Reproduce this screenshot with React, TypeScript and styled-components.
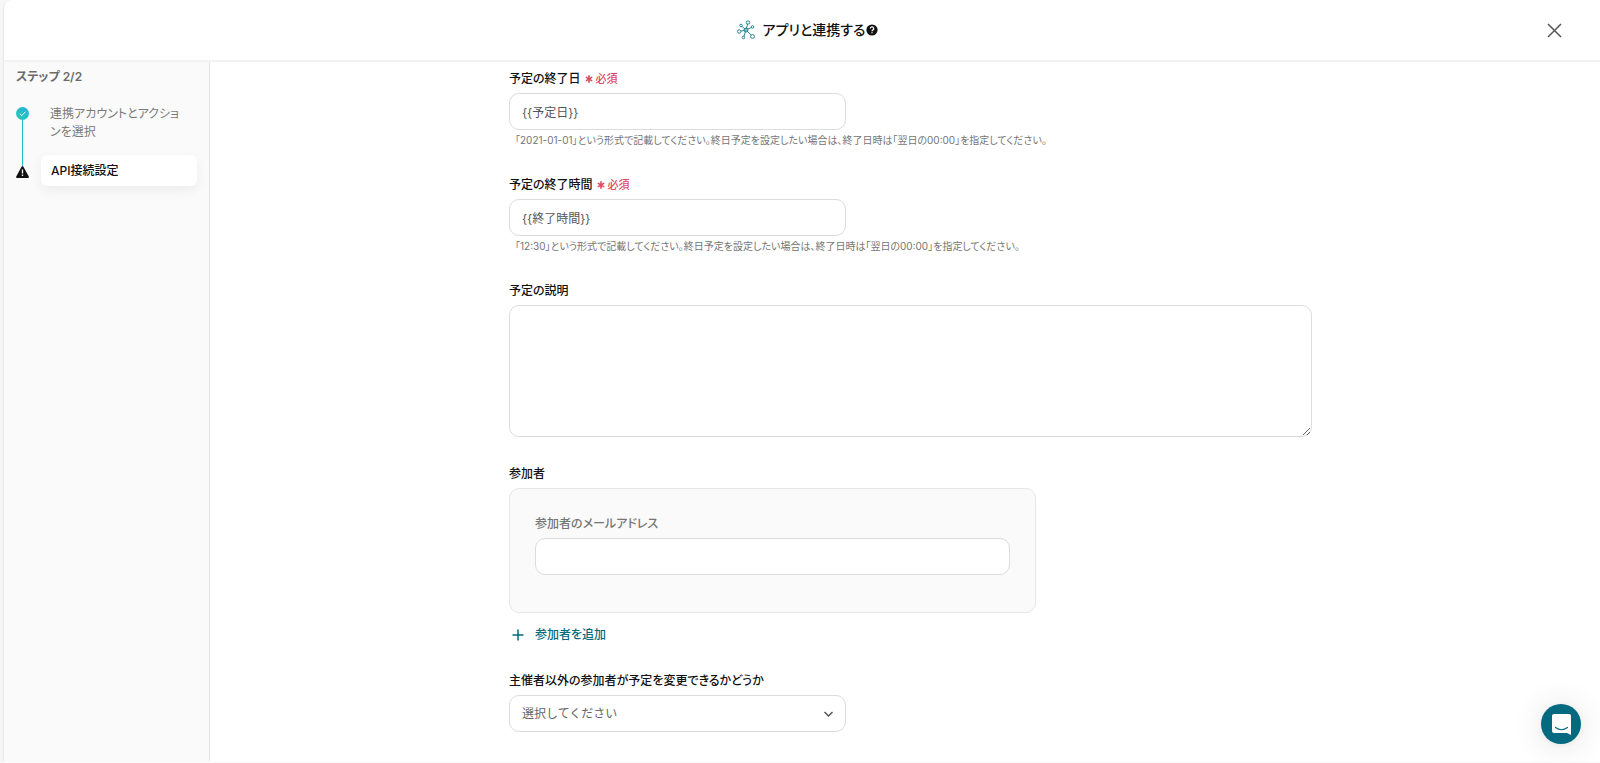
import React from 'react';
import styled, { createGlobalStyle } from 'styled-components';

const GlobalStyle = createGlobalStyle`
  * { box-sizing: border-box; }
  body {
    margin: 0;
    background: #f6f6f6;
    color: #111;
    font-family: Inter, "Noto Sans CJK JP", sans-serif;
    font-feature-settings: "palt";
    font-size: 12px;
    line-height: 18px;
  }
  button, input, select, textarea {
    font: inherit;
    font-feature-settings: inherit;
    color: inherit;
  }
`;

const Panel = styled.div`
  display: flex;
  flex-direction: column;
  height: 100vh;
  margin-left: 3px;
  overflow: hidden;
  background: #fff;
  border-left: 1px solid #e9e9e9;
  border-bottom: 2px solid #fcfcfc;
  border-radius: 8px 0 0 0;
`;

const Header = styled.header`
  display: grid;
  grid-template-columns: 1fr auto 1fr;
  align-items: center;
  flex: none;
  height: 62px;
  padding: 0 36px 0 48px;
  border-bottom: 2px solid #f2f2f2;
`;

const Title = styled.h1`
  display: flex;
  grid-column: 2;
  align-items: center;
  margin: 0;
  font-size: 14px;
  font-weight: 500;
  line-height: 20px;
`;

const Logo = styled.svg`
  width: 18px;
  height: 20px;
  margin-right: 8px;
`;

const IconButton = styled.button`
  display: flex;
  padding: 0;
  border: 0;
  background: none;
  cursor: pointer;
`;

const CloseButton = styled(IconButton)`
  justify-self: end;
  padding: 2px;
`;

const Body = styled.div`
  display: flex;
  flex: 1;
  min-height: 0;
`;

const Sidebar = styled.aside`
  flex: none;
  width: 206px;
  padding: 6px 12px;
  background: #fafafa;
  border-right: 1px solid #e6e6e6;
`;

const StepCount = styled.p`
  margin: 0 0 19px;
  color: #6b6b6b;
  font-weight: 600;
`;

const Steps = styled.ol`
  margin: 0;
  padding: 0;
  list-style: none;
`;

const Step = styled.li`
  display: flex;
  gap: 12px;
`;

const StepRail = styled.div<{ $first?: boolean }>`
  display: flex;
  flex: none;
  flex-direction: column;
  align-items: center;
  width: 13px;
  padding-top: ${(p) => (p.$first ? '2px' : '0')};
`;

const StepLine = styled.span<{ $lead?: boolean }>`
  flex: ${(p) => (p.$lead ? '0 0 11px' : '1')};
  width: 1px;
  background: #22bfc3;
`;

const StepLabel = styled.div`
  flex: 1;
  padding: 0 12px 14px 9px;
  color: #7a7a7a;
`;

const CurrentStep = styled.div`
  flex: 1;
  padding: 7px 10px 6px;
  border-radius: 6px;
  background: #fff;
  box-shadow: 0 4px 12px rgba(0, 0, 0, 0.06);
  font-weight: 500;
`;

const Main = styled.main`
  flex: 1;
  min-width: 0;
  padding: 8px 0 24px 11px;
  overflow: hidden;
`;

const Form = styled.form`
  display: flex;
  flex-direction: column;
  gap: 28px;
  max-width: 803px;
  margin: 0 auto;
`;

const Field = styled.div`
  display: flex;
  flex-direction: column;
  align-items: flex-start;
`;

const Label = styled.label<{ $muted?: boolean }>`
  display: flex;
  align-items: center;
  margin-bottom: 5px;
  color: ${(p) => (p.$muted ? '#757575' : '#111')};
  font-weight: 500;
`;

const Required = styled.span`
  display: inline-flex;
  align-items: center;
  gap: 3px;
  margin-left: 4px;
  color: #e2485f;
  font-size: 11px;
`;

const Input = styled.input<{ $wide?: boolean }>`
  width: ${(p) => (p.$wide ? '100%' : '337px')};
  height: 37px;
  padding: 0 12px;
  border: 1px solid #dcdcdc;
  border-radius: 10px;
  background: #fff;
  color: #555;
`;

const Help = styled.p`
  margin: 2px 0 0 6px;
  color: #757575;
  font-size: 10px;
  line-height: 16px;
`;

const TextArea = styled.textarea`
  display: block;
  width: 100%;
  height: 132px;
  padding: 10px 12px;
  border: 1px solid #dcdcdc;
  border-radius: 10px;
  background: #fff;
  resize: vertical;
`;

const Group = styled.div`
  display: flex;
  flex-direction: column;
  width: 527px;
  max-width: 100%;
  padding: 26px 25px 37px;
  border: 1px solid #e6e6e6;
  border-radius: 10px;
  background: #fafafa;
`;

const AddButton = styled(IconButton)`
  align-items: center;
  gap: 10px;
  margin: 13px 0 0 2px;
  color: #056a7a;
  font-weight: 500;
`;

const SelectWrap = styled.div`
  display: grid;
  align-items: center;
  width: 337px;
  & > * { grid-area: 1 / 1; }
  svg { justify-self: end; margin-right: 12px; pointer-events: none; }
`;

const Select = styled.select`
  width: 100%;
  height: 37px;
  padding: 0 12px;
  appearance: none;
  border: 1px solid #dcdcdc;
  border-radius: 10px;
  background: #fff;
  color: #666;
  font-feature-settings: normal;
`;

const Launcher = styled(IconButton)`
  position: fixed;
  right: 19px;
  bottom: 19px;
  align-items: center;
  justify-content: center;
  width: 40px;
  height: 40px;
  border-radius: 50%;
  background: #056a80;
  box-shadow: 0 1px 6px rgba(0, 0, 0, 0.06), 0 2px 32px rgba(0, 0, 0, 0.12);
`;

const nodes = [[11, 2.5, 1.7], [4, 5.5, 1.3], [15.5, 7, 1.3], [2.2, 11.5, 1.7], [6.5, 17.5, 1.3], [15.5, 16.5, 1.9]];

function NetworkLogo() {
  return (
    <Logo viewBox="0 0 18 20" fill="none" stroke="#167a86" aria-hidden="true">
      {nodes.map(([x, y]) => <path key={`${x}-${y}`} d={`M9 10L${x} ${y}`} strokeWidth="0.9" />)}
      {nodes.map(([x, y, r]) => (
        <circle key={`${x}-${y}`} cx={x} cy={y} r={r} fill="#fff" strokeWidth="0.9" />
      ))}
      <circle cx="9" cy="10" r="2" fill="#7fbcc2" strokeWidth="0.9" />
    </Logo>
  );
}

function RequiredMark() {
  return (
    <Required>
      <svg width="8" height="8" viewBox="0 0 8 8" stroke="currentColor" strokeWidth="1.6" aria-hidden="true">
        <path d="M4 0.300v7.400M0.800 2.150l6.400 3.700M7.200 2.150l-6.400 3.700" />
      </svg>
      必須
    </Required>
  );
}

export default function App() {
  return (
    <>
      <GlobalStyle />
      <Panel>
        <Header>
          <Title>
            <NetworkLogo />
            アプリと連携する
            <IconButton type="button" aria-label="ヘルプ">
              <svg width="14" height="14" viewBox="0 0 14 14">
                <circle cx="7" cy="7" r="5.6" fill="#111" />
                <path d="M5.3 5.6a1.7 1.7 0 1 1 2.4 1.6Q7 7.500 7 8.200M7 9.300v1" fill="none" stroke="#fff" strokeWidth="1.3" />
              </svg>
            </IconButton>
          </Title>
          <CloseButton type="button" aria-label="閉じる">
            <svg width="15" height="15" viewBox="0 0 15 15" fill="none" stroke="#555" strokeWidth="1.500">
              <path d="M1 1l13 13M14 1L1 14" />
            </svg>
          </CloseButton>
        </Header>
        <Body>
          <Sidebar>
            <StepCount>ステップ 2/2</StepCount>
            <Steps>
              <Step>
                <StepRail $first>
                  <svg width="13" height="13" viewBox="0 0 13 13">
                    <defs>
                      <linearGradient id="done" x1="0" y1="1" x2="1" y2="0">
                        <stop offset="0" stopColor="#2cc9b4" />
                        <stop offset="1" stopColor="#1fb2dc" />
                      </linearGradient>
                    </defs>
                    <circle cx="6.500" cy="6.500" r="6.500" fill="url(#done)" />
                    <path d="M3.800 6.700l2 1.900 3.600-3.800" fill="none" stroke="#fff" />
                  </svg>
                  <StepLine />
                </StepRail>
                <StepLabel>連携アカウントとアクションを選択</StepLabel>
              </Step>
              <Step aria-current="step">
                <StepRail>
                  <StepLine $lead />
                  <svg width="13" height="12" viewBox="0 0 13 12">
                    <path d="M6.500 1L12 11H1Z" fill="#111" stroke="#111" strokeWidth="1.800" strokeLinejoin="round" />
                    <path d="M6.500 3.500v4M6.500 8.600v1.300" stroke="#fff" strokeWidth="1.300" />
                  </svg>
                </StepRail>
                <CurrentStep>API接続設定</CurrentStep>
              </Step>
            </Steps>
          </Sidebar>
          <Main>
            <Form onSubmit={(e) => e.preventDefault()}>
              <Field>
                <Label htmlFor="end-date">予定の終了日<RequiredMark /></Label>
                <Input id="end-date" defaultValue="{{予定日}}" />
                <Help>「2021-01-01」という形式で記載してください。終日予定を設定したい場合は、終了日時は「翌日の00:00」を指定してください。</Help>
              </Field>
              <Field>
                <Label htmlFor="end-time">予定の終了時間<RequiredMark /></Label>
                <Input id="end-time" defaultValue="{{終了時間}}" />
                <Help>「12:30」という形式で記載してください。終日予定を設定したい場合は、終了日時は「翌日の00:00」を指定してください。</Help>
              </Field>
              <Field>
                <Label htmlFor="description">予定の説明</Label>
                <TextArea id="description" />
              </Field>
              <Field role="group" aria-labelledby="attendees">
                <Label as="div" id="attendees">参加者</Label>
                <Group>
                  <Label htmlFor="attendee-email" $muted>参加者のメールアドレス</Label>
                  <Input id="attendee-email" type="email" $wide />
                </Group>
                <AddButton type="button">
                  <svg width="14" height="14" viewBox="0 0 14 14" fill="none" stroke="currentColor" strokeWidth="1.500">
                    <path d="M7 1.500v11M1.500 7h11" />
                  </svg>
                  参加者を追加
                </AddButton>
              </Field>
              <Field>
                <Label htmlFor="can-edit">主催者以外の参加者が予定を変更できるかどうか</Label>
                <SelectWrap>
                  <Select id="can-edit"><option>選択してください</option></Select>
                  <svg width="11" height="8" viewBox="0 0 11 8" fill="none" stroke="#555" strokeWidth="1.500">
                    <path d="M1.500 2l4 4 4-4" />
                  </svg>
                </SelectWrap>
              </Field>
            </Form>
          </Main>
        </Body>
      </Panel>
      <Launcher type="button" aria-label="チャットを開く">
        <svg width="19" height="21" viewBox="0 0 19 21">
          <path d="M2 0h15a2 2 0 0 1 2 2v19l-4-2H2a2 2 0 0 1-2-2V2a2 2 0 0 1 2-2z" fill="#fff" />
          <path d="M3.500 13.500q6 4.500 12 0" fill="none" stroke="#056a80" strokeWidth="1.200" strokeLinecap="round" />
        </svg>
      </Launcher>
    </>
  );
}
